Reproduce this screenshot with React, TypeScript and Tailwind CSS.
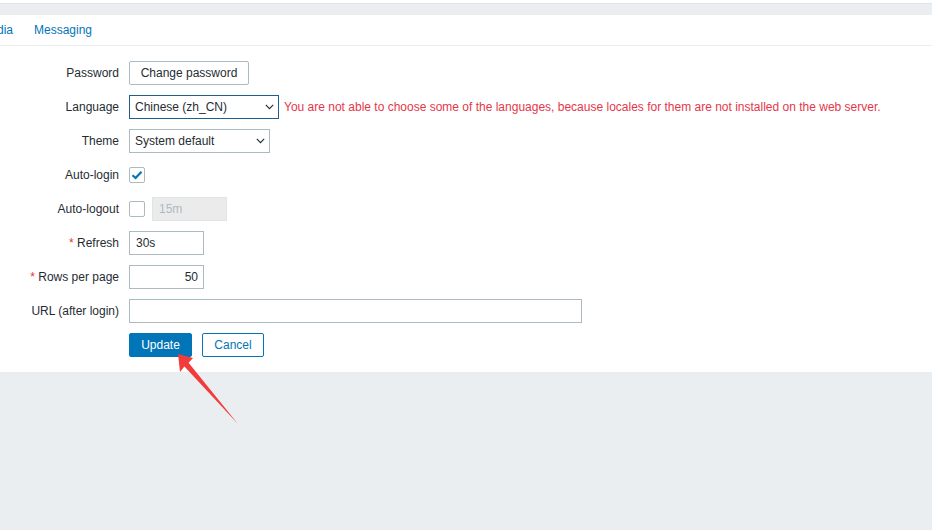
import React from 'react';

const Chevron: React.FC = () => (
  <svg width="9" height="6" viewBox="0 0 9 6" className="shrink-0">
    <path d="M0.8 0.8 L4.5 4.6 L8.2 0.8" fill="none" stroke="#1f2c33" strokeWidth="1.1" />
  </svg>
);

const Row: React.FC<{ label: React.ReactNode; children: React.ReactNode }> = ({ label, children }) => (
  <div className="flex items-center h-[24px]">
    <div className="w-[119px] text-right text-[#1f2c33] whitespace-nowrap">{label}</div>
    <div className="ml-[10px] flex items-center">{children}</div>
  </div>
);

const Req: React.FC<{ text: string }> = ({ text }) => (
  <span>
    <span className="text-[#e33734]">*</span> {text}
  </span>
);

export default function App() {
  return (
    <div className="relative min-h-screen bg-[#ebeef0] font-['Liberation_Sans',Arial,sans-serif] text-[12px] leading-none">
      {/* top strip */}
      <div className="h-[4px] bg-white border-b border-[#dfe4e7]"></div>
      <div className="h-[11px]"></div>

      <div className="bg-white">
        {/* tabs */}
        <div className="h-[31px] border-b border-[#ebeef0] flex items-center text-[#0275b8]">
          <span className="-ml-[3px] w-[37px]">dia</span>
          <span>Messaging</span>
        </div>

        {/* form */}
        <div className="pt-[15px] pb-[15px] flex flex-col gap-[10px]">
          <Row label="Password">
            <div className="h-[24px] w-[120px] border border-[#acbbc2] rounded-[2px] flex items-center justify-center text-[#1f2c33]">
              Change password
            </div>
          </Row>

          <Row label="Language">
            <div className="h-[24px] w-[150px] border border-[#1e5f8f] flex items-center justify-between pl-[5px] pr-[4px] text-[#1f2c33]">
              <span>Chinese (zh_CN)</span>
              <Chevron />
            </div>
            <span className="ml-[5px] text-[#e6364a] whitespace-nowrap">
              You are not able to choose some of the languages, because locales for them are not installed on the web server.
            </span>
          </Row>

          <Row label="Theme">
            <div className="h-[24px] w-[141px] border border-[#acbbc2] flex items-center justify-between pl-[5px] pr-[4px] text-[#1f2c33]">
              <span>System default</span>
              <Chevron />
            </div>
          </Row>

          <Row label="Auto-login">
            <div className="w-[16px] h-[16px] border border-[#acbbc2] rounded-[2px] flex items-center justify-center">
              <svg width="12" height="10" viewBox="0 0 12 10">
                <path d="M1.5 5.2 L4.6 8 L10.5 1.8" fill="none" stroke="#0275b8" strokeWidth="2.2" />
              </svg>
            </div>
          </Row>

          <Row label="Auto-logout">
            <div className="w-[16px] h-[16px] border border-[#acbbc2] rounded-[2px]"></div>
            <div className="ml-[7px] h-[24px] w-[75px] border border-[#dfe4e7] bg-[#ebebeb] flex items-center pl-[6px] text-[#acbbc2]">
              15m
            </div>
          </Row>

          <Row label={<Req text="Refresh" />}>
            <div className="h-[24px] w-[75px] border border-[#acbbc2] flex items-center pl-[6px] text-[#1f2c33]">30s</div>
          </Row>

          <Row label={<Req text="Rows per page" />}>
            <div className="h-[24px] w-[75px] border border-[#acbbc2] flex items-center justify-end pr-[5px] text-[#1f2c33]">50</div>
          </Row>

          <Row label="URL (after login)">
            <div className="h-[24px] w-[453px] border border-[#acbbc2]"></div>
          </Row>

          <Row label="">
            <div className="h-[24px] w-[63px] bg-[#0275b8] border border-[#0275b8] rounded-[2px] flex items-center justify-center text-white">
              Update
            </div>
            <div className="ml-[10px] h-[24px] w-[62px] bg-white border border-[#0275b8] rounded-[2px] flex items-center justify-center text-[#0275b8]">
              Cancel
            </div>
          </Row>
        </div>
      </div>

      {/* annotation arrow */}
      <svg className="absolute left-0 top-0 pointer-events-none" width="932" height="530">
        <polygon
          points="178,354 193,358 188.6,362.8 238,424 184.4,366.6 180,372"
          fill="#f23b3b"
        />
      </svg>
    </div>
  );
}
